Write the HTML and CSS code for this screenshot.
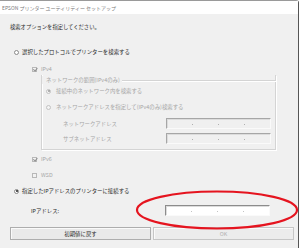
FILE: index.html
```html
<!DOCTYPE html>
<html lang="ja">
<head>
<meta charset="utf-8">
<link rel="stylesheet" href="styles.css">
</head>
<body>
<div class="window">
  <div class="titlebar">EPSON プリンター ユーティリティー セットアップ</div>
  <div class="content">
    <div class="prompt">検索オプションを指定してください。</div>
    <div class="row opt"><span class="radio"></span><span>選択したプロトコルでプリンターを検索する</span></div>
    <div class="sub">
      <div class="row chk dis"><span class="box checked"></span><span>IPv4</span></div>
      <div class="group">
        <div class="legend"><span class="legend-text">ネットワークの範囲(IPv4のみ)</span><span class="legend-line"></span></div>
        <div class="row opt dis"><span class="radio on"></span><span>接続中のネットワーク内を検索する</span></div>
        <div class="row opt dis second"><span class="radio"></span><span>ネットワークアドレスを指定して(IPv4のみ)検索する</span></div>
        <div class="field dis first"><span class="flabel">ネットワークアドレス</span><span class="ipbox"><i></i><i></i><i></i></span></div>
        <div class="field dis"><span class="flabel">サブネットアドレス</span><span class="ipbox"><i></i><i></i><i></i></span></div>
      </div>
      <div class="row chk dis v6"><span class="box checked"></span><span>IPv6</span></div>
      <div class="row chk dis wsd"><span class="box"></span><span>WSD</span></div>
    </div>
    <div class="row opt direct"><span class="radio on"></span><span>指定したIPアドレスのプリンターに接続する</span></div>
    <div class="field ipfield"><span class="flabel iplabel">IPアドレス:</span><span class="ipbox white"><i></i><i></i><i></i></span></div>
    <div class="buttons">
      <div class="btn">初期値に戻す</div>
      <div class="btn disabled">OK</div>
    </div>
  </div>
  <svg class="mark" width="166" height="42" viewBox="0 0 166 42"><ellipse cx="83" cy="21" rx="80" ry="18.5" fill="none" stroke="#e5141f" stroke-width="2.2"/></svg>
</div>
</body>
</html>
```
FILE: styles.css
```css
* { box-sizing: border-box; }
html, body { margin: 0; padding: 0; background: #ffffff; }
body {
  font-family: "Noto Sans CJK JP", "Noto Sans", sans-serif;
  font-size: 5.4px;
  color: #2a2a2a;
  width: 300px;
  height: 248px;
  overflow: hidden;
}
.window {
  position: relative;
  width: 299px;
  height: 260px;
  border-top: 1px solid #9a9a9a;
  border-right: 1px solid #555;
  border-top-right-radius: 3px;
  background: #f0f0f0;
}
.titlebar {
  height: 13px;
  background: #fff;
  color: #7a7a7a;
  padding-left: 2px;
  display: flex;
  align-items: center;
  font-size: 5px;
}
.content {
  padding-left: 10px;
  display: flex;
  flex-direction: column;
}
.prompt {
  height: 10px;
  margin-top: 8px;
  display: flex;
  align-items: center;
  font-size: 5.3px;
}
.row {
  height: 10px;
  display: flex;
  align-items: center;
}
.opt { padding-left: 4px; gap: 3px; }
.content > .opt { margin-top: 15px; }
.dis { color: #a6a6a6; }
.radio {
  width: 5px;
  height: 5px;
  border-radius: 50%;
  border: 1px solid #8a8a8a;
  background: #fff;
  flex: none;
  display: flex;
  align-items: center;
  justify-content: center;
}
.dis .radio { border-color: #c2c2c2; background: #f4f4f4; }
.radio.on::after {
  content: "";
  width: 2px;
  height: 2px;
  border-radius: 50%;
  background: #222;
}
.dis .radio.on::after { background: #9a9a9a; }
.sub { padding-left: 22px; display: flex; flex-direction: column; }
.chk { gap: 4px; }
.sub > .chk:first-child { margin-top: 7px; }
.box {
  width: 5px;
  height: 5px;
  border: 1px solid #b8b8b8;
  background: #f2f2f2;
  flex: none;
  position: relative;
}
.box.checked::after {
  content: "";
  position: absolute;
  left: 1px;
  top: -0.5px;
  width: 1.6px;
  height: 2.6px;
  border-right: 1px solid #8e8e8e;
  border-bottom: 1px solid #8e8e8e;
  transform: rotate(40deg);
}
.group {
  width: 235px;
  margin-left: 9px;
  margin-top: 1px;
  height: 75px;
  border-left: 1px solid #d4d4d4;
  border-right: 1px solid #d4d4d4;
  border-bottom: 1px solid #d4d4d4;
  box-shadow: inset 1px 0 0 #fff, 1px 1px 0 #fff;
  display: flex;
  flex-direction: column;
  padding-left: 3px;
}
.legend {
  height: 10px;
  display: flex;
  align-items: center;
  margin-left: -4px;
  margin-right: -1px;
  color: #a6a6a6;
}
.legend-text { padding-left: 4px; padding-right: 2px; background: #f0f0f0; }
.legend::before {
  content: "";
  width: 1px;
}
.legend-line {
  flex: 1;
  height: 1px;
  background: #d4d4d4;
  box-shadow: 0 1px 0 #fff;
}
.group .opt { padding-left: 1px; gap: 5px; margin-top: 1px; }
.group .opt.second { margin-top: 6px; }
.field {
  height: 11px;
  display: flex;
  align-items: center;
}
.group .field { padding-left: 18px; margin-top: 4px; }
.group .field.first { margin-top: 6px; }
.flabel { width: 103px; flex: none; }
.ipbox {
  width: 105px;
  height: 11px;
  border-top: 1px solid #a6a6a6;
  border-left: 1px solid #a6a6a6;
  border-right: 1px solid #fafafa;
  border-bottom: 1px solid #fafafa;
  box-shadow: inset 1px 1px 0 #dcdcdc;
  background: #f0f0f0;
  display: flex;
  align-items: center;
  justify-content: space-evenly;
}
.ipbox i {
  width: 1px;
  height: 1px;
  background: #b0b0b0;
  margin-top: 2px;
}
.ipbox.white { background: #fff; border-top-color: #8c8c8c; border-left-color: #8c8c8c; }
.ipbox.white i { background: #c4c4c4; }
.v6 { margin-top: 4px; }
.wsd { margin-top: 6px; }
.content > .direct { margin-top: 6px; }
.ipfield { margin-top: 9px; padding-left: 21px; }
.iplabel { width: 134px; }
.buttons {
  display: flex;
  gap: 2px;
  margin-top: 11px;
}
.btn {
  width: 141px;
  height: 13px;
  border: 1px solid #adadad;
  background: #e9e9e9;
  box-shadow: inset 1px 1px 0 #fafafa;
  display: flex;
  align-items: center;
  justify-content: center;
  color: #2a2a2a;
}
.btn.disabled { color: #b0b0b0; border-color: #c6c6c6; background: #ececec; }
.mark {
  position: absolute;
  left: 134px;
  top: 188px;
}
```
